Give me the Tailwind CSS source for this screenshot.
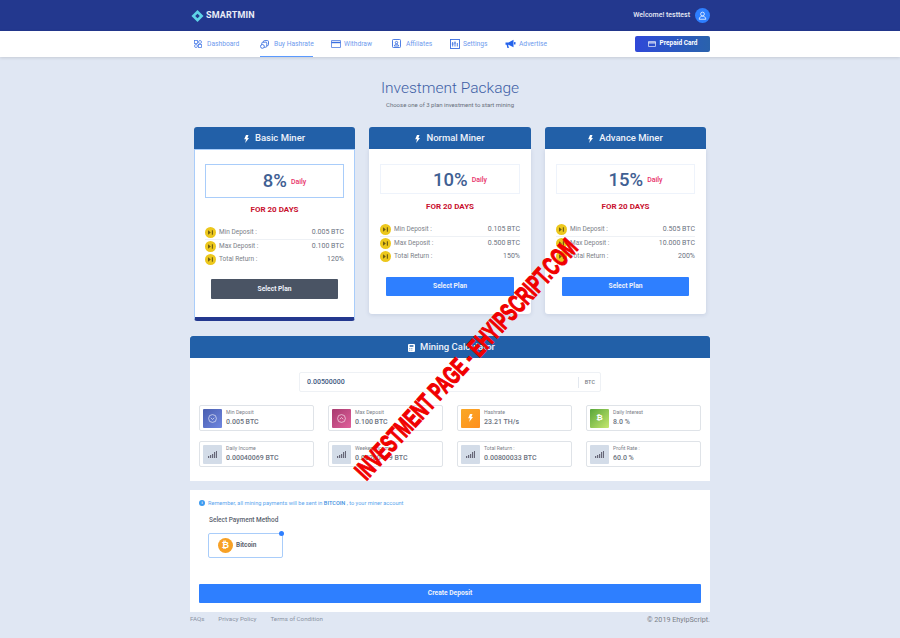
<!DOCTYPE html>
<html lang="en">
<head>
  <meta charset="UTF-8" />
  <title>Investment Package - Smartmin</title>
  <script src="https://cdn.jsdelivr.net/npm/@tailwindcss/browser@4"></script>
</head>
<body class="bg-[#e0e7f3] font-['Roboto',sans-serif] h-[638px] w-[900px] overflow-hidden relative">

  <!-- top bar -->
  <header class="bg-[#23388e] h-[31px]">
    <div class="w-[520px] mx-auto h-full flex items-center justify-between">
      <div class="flex items-center gap-[2px] pl-[1px]">
        <svg width="13" height="14" viewBox="0 0 14 14"><path d="M7 .5 13.500 7 7 13.500 .5 7z" fill="#5fd3e8"/><path d="M7 4.500 9.500 7 7 9.500 4.500 7z" fill="#23388e"/></svg>
        <span class="text-[#e8ecf6] text-[9px] font-bold tracking-[0.15px]">SMARTMIN</span>
      </div>
      <div class="flex items-center gap-[5px]">
        <span class="text-[#e8ecf6] text-[7px] font-medium">Welcome! testtest</span>
        <span class="w-[15px] h-[15px] rounded-full bg-[#2e7fff] flex items-center justify-center">
          <svg width="9" height="9" viewBox="0 0 24 24" fill="none" stroke="#fff" stroke-width="2"><circle cx="12" cy="8" r="5"/><path d="M3 22c1-6 4-8 9-8s8 2 9 8z"/></svg>
        </span>
      </div>
    </div>
  </header>

  <!-- nav -->
  <nav class="bg-white h-[26px] shadow-[0_1px_3px_rgba(0,0,0,0.12)]">
    <div class="w-[520px] mx-auto h-full flex items-center relative">
      <div class="flex items-center text-[6.700px] text-[#6f9bee] h-full pl-[4px]">
        <a class="flex items-center gap-[5px] w-[66px]">
          <svg width="8" height="8" viewBox="0 0 8 8" fill="none" stroke="#4f7fe8" stroke-width="0.8"><rect x=".5" y=".5" width="3" height="3"/><rect x="4.500" y=".5" width="3" height="3" rx="1.500"/><rect x=".5" y="4.500" width="3" height="3" rx="1.500"/><rect x="4.500" y="4.500" width="3" height="3"/></svg>
          Dashboard
        </a>
        <a class="flex items-center gap-[5px] w-[71px] h-full relative">
          <svg width="9" height="9" viewBox="0 0 9 9" fill="none" stroke="#3b6fe0" stroke-width="0.9"><rect x="3.500" y=".6" width="5" height="5" rx="1"/><rect x="1.800" y="2.200" width="5" height="5" rx="1" fill="#fff"/><circle cx="2.400" cy="6.400" r="1.900" fill="#fff"/></svg>
          Buy Hashrate
          <span class="absolute left-0 bottom-0 h-[1px] w-[53px] bg-[#5b9aff]"></span>
        </a>
        <a class="flex items-center gap-[3px] w-[61px]">
          <svg width="10" height="8" viewBox="0 0 10 8" fill="none" stroke="#3b6fe0" stroke-width="0.8"><rect x=".4" y=".4" width="9.200" height="7.200" rx=".6"/><path d="M.4 2.500h9.200" stroke-width="1.400"/></svg>
          Withdraw
        </a>
        <a class="flex items-center gap-[5px] w-[58px]">
          <svg width="9" height="9" viewBox="0 0 9 9" fill="none" stroke="#3b6fe0" stroke-width="0.9"><rect x=".5" y=".5" width="8" height="8" rx=".8"/><circle cx="4.500" cy="3.600" r="1.200"/><path d="M2.300 7c.3-1.300 1.100-1.800 2.200-1.800s1.900.5 2.200 1.800z"/></svg>
          Affiliates
        </a>
        <a class="flex items-center gap-[3px] w-[55px]">
          <svg width="10" height="10" viewBox="0 0 10 10" fill="none" stroke="#3b6fe0" stroke-width="0.9"><rect x=".5" y=".5" width="9" height="9"/><path d="M2.700 3v4.500M5 2.500v5M7.300 4v3.500M1.800 5h1.800M4.200 4h1.600"/></svg>
          Settings
        </a>
        <a class="flex items-center gap-[3px]">
          <svg width="11" height="10" viewBox="0 0 11 10" fill="#2563eb"><path d="M.5 3.500h3L8.500.8v7.400L3.500 5.800h-.4l.8 3.200H2.400L1.600 5.800H.5z"/><rect x="9" y="3" width="1.500" height="2.600" rx=".5"/></svg>
          Advertise
        </a>
      </div>
      <a class="absolute right-0 top-[5px] h-[16px] w-[75px] rounded-[2px] bg-gradient-to-r from-[#3048d8] to-[#2a62ac] flex items-center justify-center gap-[4px] text-white text-[6.500px] font-bold">
        <svg width="8" height="6" viewBox="0 0 8 6" fill="none" stroke="#fff" stroke-width="0.7"><rect x=".4" y=".4" width="7.200" height="5.200" rx=".6"/><path d="M.4 1.900h7.200" stroke-width="1"/></svg>
        Prepaid Card
      </a>
    </div>
  </nav>

  <main class="w-[520px] mx-auto">
    <div class="text-center pt-[21px] h-[70px]">
      <h1 class="text-[#3e5fa6] text-[15.500px] font-light leading-[20px]">Investment Package</h1>
      <p class="text-[#68707c] text-[6px] leading-[10px] mt-[2px]">Choose one of 3 plan investment to start mining</p>
    </div>

    <!-- plans -->
    <div class="flex items-start gap-[14px] px-[4px] h-[209px]">
      <section class="w-[161px]">
        <div class="bg-[#2260a8] rounded-t-[3px] h-[22px] pt-[1px] flex items-center justify-center gap-[6px] text-[#eef2fa] text-[9.500px] font-medium">
          <svg width="5" height="8" viewBox="0 0 5 8" fill="#fff"><path d="M2 0h2.500L3.400 3H5L1.200 8l.8-3.700H.2z"/></svg>
          Basic Miner
        </div>
        <div class="bg-white rounded-b-[3px] border border-[#a9cdfa] border-b-[4px] border-b-[#23388e] h-[172px] px-[10px] pt-[14px]">
          <div class="border border-[#a9cdfa] h-[34px] pl-[20px] pt-[2px] flex items-center justify-center gap-[4px]">
            <span class="text-[#3f6093] text-[18.500px] font-medium">8%</span>
            <span class="text-[#e8316a] text-[7px] font-medium">Daily</span>
          </div>
          <p class="text-center text-[#c8102e] text-[8px] font-bold mt-[7px] leading-[10px]">FOR 20 DAYS</p>
          <ul class="mt-[11px] text-[6.500px] text-[#7b8088]">
            <li class="flex items-center justify-between h-[14px] border-b border-[#eef1f5]"><span class="flex items-center gap-[3px]"><svg width="11" height="11" viewBox="0 0 10 10"><circle cx="5" cy="5" r="5" fill="#ecc71c"/><path d="M2.800 3v4L5.300 5z" fill="#6b5a14"/><rect x="6.200" y="3" width="1" height="4" fill="#6b5a14"/></svg>Min Deposit :</span><span class="text-[7px] text-[#6b7280]">0.005 BTC</span></li>
            <li class="flex items-center justify-between h-[13px]"><span class="flex items-center gap-[3px]"><svg width="11" height="11" viewBox="0 0 10 10"><circle cx="5" cy="5" r="5" fill="#ecc71c"/><path d="M2.800 3v4L5.300 5z" fill="#6b5a14"/><rect x="6.200" y="3" width="1" height="4" fill="#6b5a14"/></svg>Max Deposit :</span><span class="text-[7px] text-[#6b7280]">0.100 BTC</span></li>
            <li class="flex items-center justify-between h-[13px]"><span class="flex items-center gap-[3px]"><svg width="11" height="11" viewBox="0 0 10 10"><circle cx="5" cy="5" r="5" fill="#ecc71c"/><path d="M2.800 3v4L5.300 5z" fill="#6b5a14"/><rect x="6.200" y="3" width="1" height="4" fill="#6b5a14"/></svg>Total Return :</span><span class="text-[7px] text-[#6b7280]">120%</span></li>
          </ul>
          <a class="mt-[13px] mx-[6px] h-[20px] bg-[#4a5464] rounded-[1px] flex items-center justify-center text-[#eef2fa] text-[6.700px] font-bold">Select Plan</a>
        </div>
      </section>

      <section class="w-[162px]">
        <div class="bg-[#2260a8] rounded-t-[3px] h-[22px] pt-[1px] flex items-center justify-center gap-[6px] text-[#eef2fa] text-[9.500px] font-medium">
          <svg width="5" height="8" viewBox="0 0 5 8" fill="#fff"><path d="M2 0h2.500L3.400 3H5L1.200 8l.8-3.700H.2z"/></svg>
          Normal Miner
        </div>
        <div class="bg-white rounded-b-[3px] shadow-[0_1px_4px_rgba(60,80,130,0.15)] h-[165px] px-[11px] pt-[15px]">
          <div class="border border-[#eef3fb] h-[30px] pl-[20px] pt-[3px] flex items-center justify-center gap-[4px]">
            <span class="text-[#3f6093] text-[18.500px] font-medium">10%</span>
            <span class="text-[#e8316a] text-[7px] font-medium">Daily</span>
          </div>
          <p class="text-center text-[#c8102e] text-[8px] font-bold mt-[8px] leading-[10px]">FOR 20 DAYS</p>
          <ul class="mt-[11px] text-[6.500px] text-[#7b8088]">
            <li class="flex items-center justify-between h-[14px] border-b border-[#eef1f5]"><span class="flex items-center gap-[3px]"><svg width="11" height="11" viewBox="0 0 10 10"><circle cx="5" cy="5" r="5" fill="#ecc71c"/><path d="M2.800 3v4L5.300 5z" fill="#6b5a14"/><rect x="6.200" y="3" width="1" height="4" fill="#6b5a14"/></svg>Min Deposit :</span><span class="text-[7px] text-[#6b7280]">0.105 BTC</span></li>
            <li class="flex items-center justify-between h-[13px]"><span class="flex items-center gap-[3px]"><svg width="11" height="11" viewBox="0 0 10 10"><circle cx="5" cy="5" r="5" fill="#ecc71c"/><path d="M2.800 3v4L5.300 5z" fill="#6b5a14"/><rect x="6.200" y="3" width="1" height="4" fill="#6b5a14"/></svg>Max Deposit :</span><span class="text-[7px] text-[#6b7280]">0.500 BTC</span></li>
            <li class="flex items-center justify-between h-[13px]"><span class="flex items-center gap-[3px]"><svg width="11" height="11" viewBox="0 0 10 10"><circle cx="5" cy="5" r="5" fill="#ecc71c"/><path d="M2.800 3v4L5.300 5z" fill="#6b5a14"/><rect x="6.200" y="3" width="1" height="4" fill="#6b5a14"/></svg>Total Return :</span><span class="text-[7px] text-[#6b7280]">150%</span></li>
          </ul>
          <a class="mt-[14px] mx-[6px] h-[19px] bg-[#2e7fff] rounded-[1px] flex items-center justify-center text-[#eef2fa] text-[6.700px] font-bold">Select Plan</a>
        </div>
      </section>

      <section class="w-[161px]">
        <div class="bg-[#2260a8] rounded-t-[3px] h-[22px] pt-[1px] flex items-center justify-center gap-[6px] text-[#eef2fa] text-[9.500px] font-medium">
          <svg width="5" height="8" viewBox="0 0 5 8" fill="#fff"><path d="M2 0h2.500L3.400 3H5L1.200 8l.8-3.700H.2z"/></svg>
          Advance Miner
        </div>
        <div class="bg-white rounded-b-[3px] shadow-[0_1px_4px_rgba(60,80,130,0.15)] h-[165px] px-[11px] pt-[15px]">
          <div class="border border-[#eef3fb] h-[30px] pl-[20px] pt-[3px] flex items-center justify-center gap-[4px]">
            <span class="text-[#3f6093] text-[18.500px] font-medium">15%</span>
            <span class="text-[#e8316a] text-[7px] font-medium">Daily</span>
          </div>
          <p class="text-center text-[#c8102e] text-[8px] font-bold mt-[8px] leading-[10px]">FOR 20 DAYS</p>
          <ul class="mt-[11px] text-[6.500px] text-[#7b8088]">
            <li class="flex items-center justify-between h-[14px] border-b border-[#eef1f5]"><span class="flex items-center gap-[3px]"><svg width="11" height="11" viewBox="0 0 10 10"><circle cx="5" cy="5" r="5" fill="#ecc71c"/><path d="M2.800 3v4L5.300 5z" fill="#6b5a14"/><rect x="6.200" y="3" width="1" height="4" fill="#6b5a14"/></svg>Min Deposit :</span><span class="text-[7px] text-[#6b7280]">0.505 BTC</span></li>
            <li class="flex items-center justify-between h-[13px]"><span class="flex items-center gap-[3px]"><svg width="11" height="11" viewBox="0 0 10 10"><circle cx="5" cy="5" r="5" fill="#ecc71c"/><path d="M2.800 3v4L5.300 5z" fill="#6b5a14"/><rect x="6.200" y="3" width="1" height="4" fill="#6b5a14"/></svg>Max Deposit :</span><span class="text-[7px] text-[#6b7280]">10.000 BTC</span></li>
            <li class="flex items-center justify-between h-[13px]"><span class="flex items-center gap-[3px]"><svg width="11" height="11" viewBox="0 0 10 10"><circle cx="5" cy="5" r="5" fill="#ecc71c"/><path d="M2.800 3v4L5.300 5z" fill="#6b5a14"/><rect x="6.200" y="3" width="1" height="4" fill="#6b5a14"/></svg>Total Return :</span><span class="text-[7px] text-[#6b7280]">200%</span></li>
          </ul>
          <a class="mt-[14px] mx-[6px] h-[19px] bg-[#2e7fff] rounded-[1px] flex items-center justify-center text-[#eef2fa] text-[6.700px] font-bold">Select Plan</a>
        </div>
      </section>
    </div>

    <!-- calculator -->
    <section class="bg-white h-[145px]">
      <div class="bg-[#2260a8] rounded-t-[3px] h-[22px] pt-[1px] pl-[3px] flex items-center justify-center gap-[5px] text-[#eef2fa] text-[9.500px] font-medium">
        <svg width="7" height="8" viewBox="0 0 7 8" fill="#fff"><path d="M1 0h5a1 1 0 0 1 1 1v6a1 1 0 0 1-1 1H1a1 1 0 0 1-1-1V1a1 1 0 0 1 1-1zm.6 1.200v1.600h3.800V1.200zM1.400 4v.8h.9V4zm2 0v.8h.9V4zm-2 1.800v.8h.9v-.8zm2 0v.8h.9v-.8z" fill-rule="evenodd"/></svg>
        Mining Calculator
      </div>
      <div class="px-[9px]">
        <div class="mx-auto mt-[14px] w-[302px] h-[20px] border border-[#eef1f5] rounded-[2px] flex items-center justify-between pl-[7px] pr-[5px]">
          <span class="text-[#41597f] text-[7px] font-medium">0.00500000</span>
          <span class="border-l border-[#e3e8ef] pl-[6px] h-[11px] leading-[11px] text-[5.500px] text-[#7b8088] font-medium">BTC</span>
        </div>
        <div class="grid grid-cols-4 gap-x-[14px] gap-y-[10px] mt-[13px]">
          <div class="h-[26px] border border-[#dfe3e8] rounded-[2px] flex items-center gap-[4px] pl-[3px]">
            <span class="w-[19px] h-[19px] rounded-[1px] bg-gradient-to-br from-[#4a5fb0] to-[#6f86e0] flex items-center justify-center"><svg width="9" height="9" viewBox="0 0 9 9" fill="none" stroke="#fff" stroke-width="0.6"><circle cx="4.500" cy="4.500" r="3.900"/><path d="M2.800 3.800 4.500 5.500 6.200 3.800"/></svg></span>
            <div><p class="text-[5.200px] text-[#7b8088] leading-[7px]">Min Deposit</p><p class="text-[7px] text-[#6b7280] font-medium leading-[11px] mt-[1px]">0.005 BTC</p></div>
          </div>
          <div class="h-[26px] border border-[#dfe3e8] rounded-[2px] flex items-center gap-[4px] pl-[3px]">
            <span class="w-[19px] h-[19px] rounded-[1px] bg-gradient-to-br from-[#a83b70] to-[#e0609a] flex items-center justify-center"><svg width="9" height="9" viewBox="0 0 9 9" fill="none" stroke="#fff" stroke-width="0.6"><circle cx="4.500" cy="4.500" r="3.900"/><path d="M2.800 5.200 4.500 3.500 6.200 5.200"/></svg></span>
            <div><p class="text-[5.200px] text-[#7b8088] leading-[7px]">Max Deposit</p><p class="text-[7px] text-[#6b7280] font-medium leading-[11px] mt-[1px]">0.100 BTC</p></div>
          </div>
          <div class="h-[26px] border border-[#dfe3e8] rounded-[2px] flex items-center gap-[4px] pl-[3px]">
            <span class="w-[19px] h-[19px] rounded-[1px] bg-gradient-to-br from-[#f9a825] to-[#ff8f1f] flex items-center justify-center"><svg width="5" height="8" viewBox="0 0 5 8" fill="#fff"><path d="M2 0h2.500L3.400 3H5L1.200 8l.8-3.700H.2z"/></svg></span>
            <div><p class="text-[5.200px] text-[#7b8088] leading-[7px]">Hashrate</p><p class="text-[7px] text-[#6b7280] font-medium leading-[11px] mt-[1px]">23.21 TH/s</p></div>
          </div>
          <div class="h-[26px] border border-[#dfe3e8] rounded-[2px] flex items-center gap-[4px] pl-[3px]">
            <span class="w-[19px] h-[19px] rounded-[1px] bg-gradient-to-br from-[#56a63a] to-[#c6e86e] flex items-center justify-center text-white text-[8px] font-bold">₿</span>
            <div><p class="text-[5.200px] text-[#7b8088] leading-[7px]">Daily Interest</p><p class="text-[7px] text-[#6b7280] font-medium leading-[11px] mt-[1px]">8.0 %</p></div>
          </div>
          <div class="h-[26px] border border-[#dfe3e8] rounded-[2px] flex items-center gap-[4px] pl-[3px]">
            <span class="w-[19px] h-[19px] rounded-[1px] bg-[#d3dce8] flex items-center justify-center"><svg width="9" height="7" viewBox="0 0 9 7" fill="#667"><rect x="0" y="5" width="1.200" height="2"/><rect x="2" y="4" width="1.200" height="3"/><rect x="4" y="3" width="1.200" height="4"/><rect x="6" y="1" width="1.200" height="6"/><rect x="8" y="0" width="1" height="7"/></svg></span>
            <div><p class="text-[5.200px] text-[#7b8088] leading-[7px]">Daily Income</p><p class="text-[7px] text-[#6b7280] font-medium leading-[11px] mt-[1px]">0.00040069 BTC</p></div>
          </div>
          <div class="h-[26px] border border-[#dfe3e8] rounded-[2px] flex items-center gap-[4px] pl-[3px]">
            <span class="w-[19px] h-[19px] rounded-[1px] bg-[#d3dce8] flex items-center justify-center"><svg width="9" height="7" viewBox="0 0 9 7" fill="#667"><rect x="0" y="5" width="1.200" height="2"/><rect x="2" y="4" width="1.200" height="3"/><rect x="4" y="3" width="1.200" height="4"/><rect x="6" y="1" width="1.200" height="6"/><rect x="8" y="0" width="1" height="7"/></svg></span>
            <div><p class="text-[5.200px] text-[#7b8088] leading-[7px]">Weeken Income</p><p class="text-[7px] text-[#6b7280] font-medium leading-[11px] mt-[1px]">0.00280479 BTC</p></div>
          </div>
          <div class="h-[26px] border border-[#dfe3e8] rounded-[2px] flex items-center gap-[4px] pl-[3px]">
            <span class="w-[19px] h-[19px] rounded-[1px] bg-[#d3dce8] flex items-center justify-center"><svg width="9" height="7" viewBox="0 0 9 7" fill="#667"><rect x="0" y="5" width="1.200" height="2"/><rect x="2" y="4" width="1.200" height="3"/><rect x="4" y="3" width="1.200" height="4"/><rect x="6" y="1" width="1.200" height="6"/><rect x="8" y="0" width="1" height="7"/></svg></span>
            <div><p class="text-[5.200px] text-[#7b8088] leading-[7px]">Total Return :</p><p class="text-[7px] text-[#6b7280] font-medium leading-[11px] mt-[1px]">0.00800033 BTC</p></div>
          </div>
          <div class="h-[26px] border border-[#dfe3e8] rounded-[2px] flex items-center gap-[4px] pl-[3px]">
            <span class="w-[19px] h-[19px] rounded-[1px] bg-[#d3dce8] flex items-center justify-center"><svg width="9" height="7" viewBox="0 0 9 7" fill="#667"><rect x="0" y="5" width="1.200" height="2"/><rect x="2" y="4" width="1.200" height="3"/><rect x="4" y="3" width="1.200" height="4"/><rect x="6" y="1" width="1.200" height="6"/><rect x="8" y="0" width="1" height="7"/></svg></span>
            <div><p class="text-[5.200px] text-[#7b8088] leading-[7px]">Profit Rate :</p><p class="text-[7px] text-[#6b7280] font-medium leading-[11px] mt-[1px]">60.0 %</p></div>
          </div>
        </div>
      </div>
    </section>

    <!-- payment -->
    <section class="bg-white h-[122px] mt-[9px] px-[9px] pt-[9px]">
      <p class="flex items-center gap-[3px] text-[#5aa5ee] text-[5.600px] leading-[8px] whitespace-pre">
        <span class="w-[6px] h-[6px] rounded-full bg-[#3d9bf0] text-white text-[4px] leading-[6px] text-center font-bold">i</span>
        <span>Remember, all mining payments will be sent in <b class="font-medium text-[#3d8fe0]">BITCOIN</b> , to your miner account</span>
      </p>
      <p class="text-[#5c6470] text-[6.500px] font-medium ml-[10px] mt-[8px] leading-[10px]">Select Payment Method</p>
      <div class="relative ml-[9px] mt-[8px] w-[75px] h-[25px] border border-[#a9cdfa] rounded-[2px] flex items-center pl-[9px] gap-[3px]">
        <span class="w-[15px] h-[15px] rounded-full bg-[#f7a126] text-white text-[9px] font-bold flex items-center justify-center">₿</span>
        <span class="text-[#5c6470] text-[6.500px] font-bold">Bitcoin</span>
        <span class="absolute -top-[3px] -right-[2px] w-[5px] h-[5px] rounded-full bg-[#2e7fff]"></span>
      </div>
      <a class="mt-[26px] h-[19px] bg-[#2e7fff] rounded-[1px] flex items-center justify-center text-[#eef2fa] text-[6.700px] font-bold">Create Deposit</a>
    </section>

    <footer class="flex items-center justify-between h-[16px] text-[#8b93a3] text-[6.200px]">
      <div class="flex gap-[14px]"><a>FAQs</a><a>Privacy Policy</a><a>Terms of Condition</a></div>
      <span class="text-[7.200px] text-[#7b8088]">© 2019 EhyipScript.</span>
    </footer>
  </main>

  <!-- watermark, lies across the page -->
  <div class="absolute left-[466px] top-[359px] -translate-x-1/2 -translate-y-1/2 -rotate-[47.500deg] scale-x-[0.62] whitespace-nowrap text-[#f00000] text-[26px] font-bold leading-none font-['Liberation_Sans',sans-serif] [-webkit-text-stroke:1.200px_#f00000]">INVESTMENT PAGE - EHYIPSCRIPT.COM</div>
</body>
</html>
